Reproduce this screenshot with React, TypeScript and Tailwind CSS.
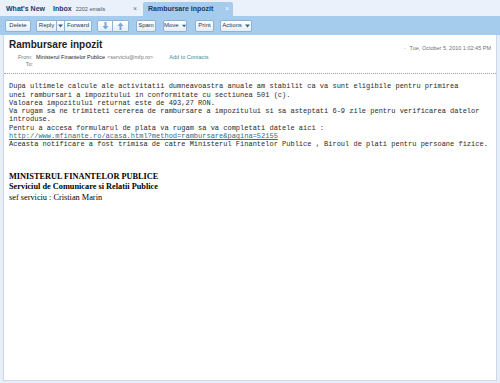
import React from "react";

const Btn = ({ children, className = "" }: { children: React.ReactNode; className?: string }) => (
  <div
    className={
      "h-[12px] flex items-center justify-center border border-[#8fb3d6] rounded-[2px] bg-gradient-to-b from-white to-[#e4eef8] text-[6px] text-[#1f3a5c] " +
      className
    }
  >
    {children}
  </div>
);

const Caret = () => (
  <svg width="5" height="4" viewBox="0 0 5 4" className="ml-[3px]">
    <path d="M0 0.5 L5 0.5 L2.5 3.5 Z" fill="#46607e" />
  </svg>
);

export default function App() {
  const font = { fontFamily: '"Liberation Sans", Arial, sans-serif' };
  return (
    <div className="w-[500px] h-[383px] bg-[#e6eef8] flex flex-col overflow-hidden" style={font}>
      {/* tab bar */}
      <div className="h-[16px] flex items-end pl-[3px] gap-[2px] bg-[#eaf1fa]">
        <div className="h-[14px] w-[45px] flex items-center pl-[3px] text-[7px] font-bold text-[#1d3a66]">
          What's New
        </div>
        <div className="h-[14px] w-[91px] flex items-center pl-[3px] text-[#1d3a66]">
          <span className="text-[7px] font-bold">Inbox</span>
          <span className="text-[5.5px] ml-[4px] text-[#44546a]">2202 emails</span>
          <span className="ml-auto mr-[4px] text-[7px] text-[#6a7686]">×</span>
        </div>
        <div className="h-[14px] w-[90px] flex items-center pl-[5px] bg-[#a5cbed] rounded-t-[2px] text-[#1d3a66]">
          <span className="text-[7px] font-bold">Rambursare inpozit</span>
          <span className="ml-auto mr-[4px] text-[7px] text-white">×</span>
        </div>
      </div>
      {/* toolbar */}
      <div className="h-[19px] bg-[#a5cbed] flex items-center pl-[5px]">
        <Btn className="w-[26px]">Delete</Btn>
        <div className="flex ml-[5px]">
          <Btn className="w-[21px] rounded-r-none">Reply</Btn>
          <Btn className="w-[8px] rounded-none border-l-0">
            <svg width="5" height="4" viewBox="0 0 5 4">
              <path d="M0 0.5 L5 0.5 L2.5 3.5 Z" fill="#46607e" />
            </svg>
          </Btn>
          <Btn className="w-[27px] rounded-l-none border-l-0">Forward</Btn>
        </div>
        <div className="flex ml-[5px]">
          <Btn className="w-[16px] rounded-r-none">
            <svg width="7" height="8" viewBox="0 0 7 8">
              <path d="M2.5 0 H4.5 V4 H6.5 L3.5 7.5 L0.5 4 H2.5 Z" fill="#7aa5db" />
            </svg>
          </Btn>
          <Btn className="w-[16px] rounded-l-none border-l-0">
            <svg width="7" height="8" viewBox="0 0 7 8">
              <path d="M2.5 8 H4.5 V4 H6.5 L3.5 0.5 L0.5 4 H2.5 Z" fill="#7aa5db" />
            </svg>
          </Btn>
        </div>
        <Btn className="w-[20px] ml-[7px]">Spam</Btn>
        <Btn className="w-[24px] ml-[7px]">
          Move
          <Caret />
        </Btn>
        <Btn className="w-[19px] ml-[8px]">Print</Btn>
        <Btn className="w-[32px] ml-[6px]">
          Actions
          <Caret />
        </Btn>
      </div>
      {/* content card */}
      <div className="flex-1 mx-[3px] mb-[2px] bg-white border-x border-b border-[#c9d9ea] flex flex-col">
        <div className="pt-[3px] pl-[5px] pr-[5px] flex items-start">
          <div className="text-[10px] font-bold text-[#222] leading-[12px] mt-[1px]">Rambursare inpozit</div>
          <div className="ml-auto mt-[6px] flex items-center text-[5.5px] text-[#707070]">
            <span className="mr-[4px] text-[#a0a0a0]">-</span>
            Tue, October 5, 2010 1:02:45 PM
          </div>
        </div>
        <div className="pl-[14px] mt-[2px] text-[5.5px] leading-[7px]">
          <div className="flex">
            <span className="w-[18px] text-[#777]">From:</span>
            <span className="text-[#222]">Ministerul Finantelor Publice</span>
            <span className="ml-[2px] text-[#777]">&lt;serviciu@mfp.ro&gt;</span>
            <span className="ml-[16px] text-[#3a8f9c]">Add to Contacts</span>
          </div>
          <div className="flex">
            <span className="w-[18px] text-right pr-[3px] text-[#777]">To:</span>
          </div>
        </div>
        <div className="mt-[5px] border-t border-dotted border-[#9aa4ae]" />
        <div
          className="pl-[5px] pt-[8px] text-[7px] leading-[8.3px] text-[#2a2a2a] whitespace-pre"
          style={{ fontFamily: '"Liberation Mono", "Courier New", monospace' }}
        >
          <div>Dupa ultimele calcule ale activitatii dumneavoastra anuale am stabilit ca va sunt eligibile pentru primirea</div>
          <div>unei rambursari a impozitului in conformitate cu sectiunea 501 (c).</div>
          <div>Valoarea impozitului returnat este de 493,27 RON.</div>
          <div>Va rugam sa ne trimiteti cererea de rambursare a impozitului si sa asteptati 6-9 zile pentru verificarea datelor</div>
          <div>introduse.</div>
          <div>Pentru a accesa formularul de plata va rugam sa va completati datele aici :</div>
          <div className="text-[#2f6d8c] underline">http://www.mfinante.ro/acasa.html?method=rambursare&amp;pagina=52155</div>
          <div>Aceasta notificare a fost trimisa de catre Ministerul Finantelor Publice , Biroul de plati pentru persoane fizice.</div>
        </div>
        <div
          className="pl-[5px] mt-[23px] text-[8.3px] leading-[10.5px] text-black"
          style={{ fontFamily: '"Liberation Serif", "Times New Roman", serif' }}
        >
          <div className="font-bold">MINISTERUL FINANTELOR PUBLICE</div>
          <div className="font-bold">Serviciul de Comunicare si Relatii Publice</div>
          <div>sef serviciu : Cristian Marin</div>
        </div>
      </div>
    </div>
  );
}
